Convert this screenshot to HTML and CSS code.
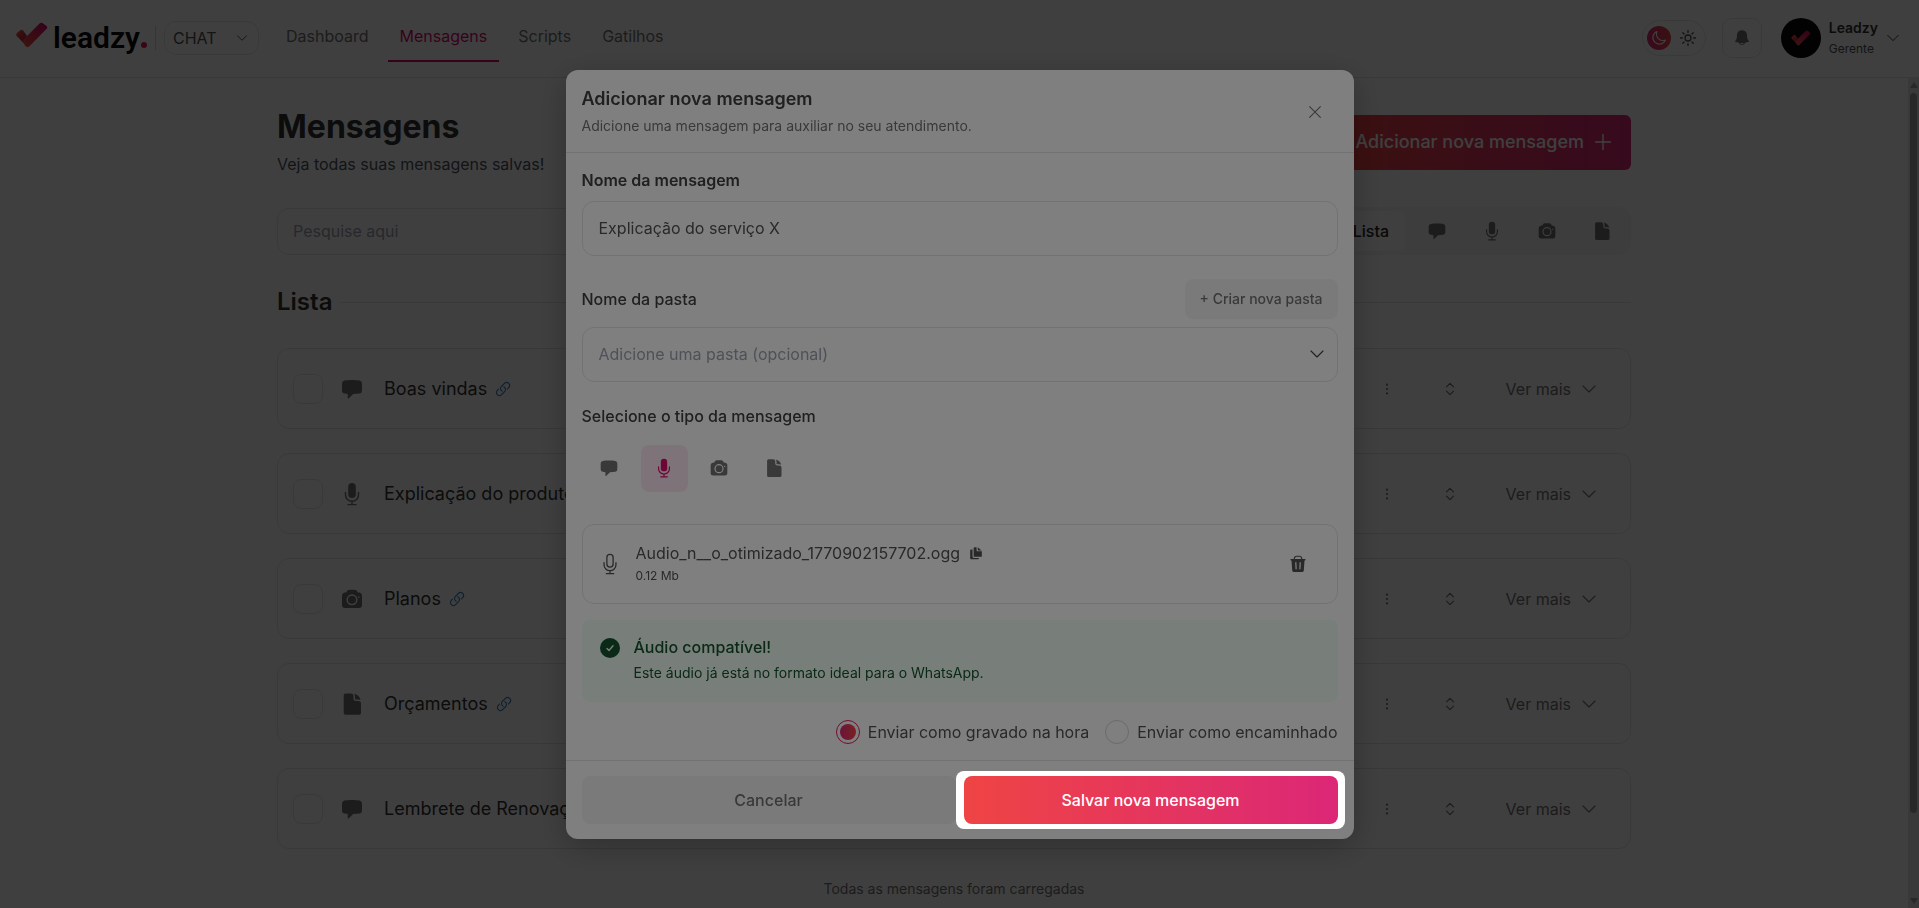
FILE: index.html
```html
<!DOCTYPE html>
<html lang="pt-BR">
<head>
    <meta charset="UTF-8">
    <meta name="viewport" content="width=device-width, initial-scale=1.0">
    <title>Leadzy - Mensagens</title>
    <link rel="stylesheet" href="styles.css">
</head>
<body>
    <!-- Shared icons -->
    <svg class="sprite" aria-hidden="true">
        <defs>
            <linearGradient id="brand" x1="0" y1="1" x2="1" y2="0">
                <stop offset="0" stop-color="#f4553f"/>
                <stop offset="1" stop-color="#d6006c"/>
            </linearGradient>
            <linearGradient id="brand-short" x1="0" y1="0" x2="1" y2="1">
                <stop offset="0" stop-color="#f4553f"/>
                <stop offset="1" stop-color="#b3103f"/>
            </linearGradient>
        </defs>
        <symbol id="i-chat" viewBox="0 0 24 24"><path d="M12 3c3 0 5.500.2 7.500.6A3 3 0 0 1 22 6.500v7a3 3 0 0 1-2.500 3c-2 .3-4.200.5-6.300.5L8.500 21.500c-.3.300-.8.100-.8-.3V17l-3.200-.4A3 3 0 0 1 2 13.500v-7a3 3 0 0 1 2.500-2.900C6.500 3.200 9 3 12 3z"/></symbol>
        <symbol id="i-mic" viewBox="0 0 24 24"><rect x="8.200" y="1" width="7.600" height="15" rx="3.800"/><path d="M5.500 10.500v2.300a6.500 6.500 0 0 0 13 0v-2.300M12 19.500v3M8 22.600h8" fill="none" stroke="currentColor" stroke-width="1.400" stroke-linecap="round"/></symbol>
        <symbol id="i-mic-o" viewBox="0 0 24 24"><g fill="none" stroke="currentColor" stroke-width="1.400" stroke-linecap="round"><rect x="8.600" y="1.500" width="6.800" height="14" rx="3.400"/><path d="M5.500 10.500v2.300a6.500 6.500 0 0 0 13 0v-2.300M12 19.500v3M8 22.600h8"/></g></symbol>
        <symbol id="i-camera" viewBox="0 0 24 24"><path fill-rule="evenodd" d="M9.300 2.700h5.400c.9 0 1.600.400 2.100 1.100l1 1.600 1.700.2A3 3 0 0 1 22 8.500V18a3 3 0 0 1-3 3H5a3 3 0 0 1-3-3V8.500a3 3 0 0 1 2.500-2.900l1.700-.2 1-1.600c.5-.7 1.200-1.100 2.100-1.100zM12 7.300a5.500 5.500 0 1 0 0 11 5.500 5.500 0 0 0 0-11zm0 1.400a4.100 4.100 0 1 1 0 8.200 4.100 4.100 0 0 1 0-8.200zm6.800.6a.8.800 0 1 0 0 1.600.8.800 0 0 0 0-1.600z"/></symbol>
        <symbol id="i-file" viewBox="0 0 24 24"><path d="M5.500 1.500H11a2.500 2.500 0 0 1 2.500 2.500v2.500A2.500 2.500 0 0 0 16 9h2.500a2.500 2.500 0 0 1 2.500 2.500V21a1.800 1.800 0 0 1-1.800 1.800H5.500A1.800 1.800 0 0 1 3.700 21V3.300a1.800 1.800 0 0 1 1.800-1.800z"/><path d="M14 1.700a8.500 8.500 0 0 1 6.600 6.400 4 4 0 0 0-2.300-.6H16a1 1 0 0 1-1-1V4.200a4 4 0 0 0-1-2.500z"/></symbol>
        <symbol id="i-copy" viewBox="0 0 24 24"><path d="M8 3.500A1.500 1.500 0 0 1 9.500 2H13v5.500A1.500 1.500 0 0 0 14.500 9H22v8a1.500 1.500 0 0 1-1.500 1.500h-11A1.500 1.500 0 0 1 8 17zM15 2l6.500 5.500H16a1 1 0 0 1-1-1zM2 7.500A1.500 1.500 0 0 1 3.500 6H6v12a2.500 2.500 0 0 0 2.500 2.500H17v.5a1.500 1.500 0 0 1-1.500 1.500h-12A1.500 1.500 0 0 1 2 21z"/></symbol>
        <symbol id="i-trash" viewBox="0 0 24 24"><path d="M7 6V5a3.300 3.300 0 0 1 3.300-3.300h3.400A3.300 3.300 0 0 1 17 5v1" fill="none" stroke="currentColor" stroke-width="1.500"/><path fill-rule="evenodd" d="M2.800 5.200h18.400a1 1 0 0 1 0 2h-.5l-1 13.300a2.300 2.300 0 0 1-2.300 2.200H6.600a2.300 2.300 0 0 1-2.300-2.200l-1-13.300h-.5a1 1 0 0 1 0-2zM8.200 9.500l.5 9.500h1.600l-.4-9.500zm5.900 0-.4 9.500h1.600l.5-9.500z"/></symbol>
        <symbol id="i-down" viewBox="0 0 24 24"><path d="m3 7.500 9 9 9-9" fill="none" stroke="currentColor" stroke-width="1.700" stroke-linecap="round" stroke-linejoin="round"/></symbol>
        <symbol id="i-plus" viewBox="0 0 24 24"><path d="M12 3v18M3 12h18" fill="none" stroke="currentColor" stroke-width="1.700" stroke-linecap="round"/></symbol>
        <symbol id="i-close" viewBox="0 0 24 24"><path d="m4 4 16 16M20 4 4 20" fill="none" stroke="currentColor" stroke-width="1.700" stroke-linecap="round"/></symbol>
        <symbol id="i-link" viewBox="0 0 24 24"><path d="M13.200 8.700a4.500 4.500 0 0 1 1.200 7.200l-4.500 4.500a4.500 4.500 0 0 1-6.400-6.400l1.800-1.800m13.400-.4 1.800-1.800a4.500 4.500 0 0 0-6.400-6.400L9.600 8.100a4.500 4.500 0 0 0 1.200 7.200" fill="none" stroke="currentColor" stroke-width="1.700" stroke-linecap="round"/></symbol>
        <symbol id="i-dots" viewBox="0 0 24 24"><circle cx="12" cy="4.500" r="1.900"/><circle cx="12" cy="12" r="1.900"/><circle cx="12" cy="19.500" r="1.900"/></symbol>
        <symbol id="i-sort" viewBox="0 0 24 24"><path d="m6 8.500 6-6 6 6m-12 7 6 6 6-6" fill="none" stroke="currentColor" stroke-width="2" stroke-linecap="round" stroke-linejoin="round"/></symbol>
        <symbol id="i-bell" viewBox="0 0 24 24"><path d="M12 1.500a6.800 6.800 0 0 0-6.800 6.800v2.200c0 2-.8 3.700-2.100 5.100-.6.700-.3 1.600.6 1.800 1.300.4 2.700.6 4.200.8a4.200 4.200 0 0 0 8.200 0c1.500-.2 2.900-.4 4.200-.8.900-.2 1.200-1.100.6-1.800a7.600 7.600 0 0 1-2.100-5.100V8.300A6.800 6.800 0 0 0 12 1.500zM9.700 18.500c1.500.1 3.100.1 4.600 0a2.400 2.400 0 0 1-4.600 0z" fill-rule="evenodd"/></symbol>
        <symbol id="i-moon" viewBox="0 0 24 24"><path d="M21.700 15A9.800 9.800 0 1 1 9 2.200 9.800 9.800 0 0 0 21.700 15z" fill="none" stroke="currentColor" stroke-width="1.700" stroke-linejoin="round"/></symbol>
        <symbol id="i-sun" viewBox="0 0 24 24"><path d="M12 2v2.500m0 15V22m10-10h-2.500m-15 0H2m17-7-1.700 1.700M6.700 17.300 5 19M19 19l-1.700-1.700M6.700 6.700 5 5" fill="none" stroke="currentColor" stroke-width="1.700" stroke-linecap="round"/><circle cx="12" cy="12" r="4" fill="none" stroke="currentColor" stroke-width="1.700"/></symbol>
        <symbol id="i-check" viewBox="0 0 32 26"><path d="M.8 11.300 4.300 8.300a2 2 0 0 1 2.800.2l3.900 5.300-3.500 7.200L.7 14a2 2 0 0 1 .1-2.700z" fill="url(#brand-short)"/><path d="M7.400 17.800 23.500 1.600a2.600 2.600 0 0 1 3.300-.3L30.500 4a2 2 0 0 1 .1 2.800L13.500 24.300a2.600 2.600 0 0 1-4-.4l-2.500-3.600a2 2 0 0 1 .4-2.500z" fill="url(#brand)"/></symbol>
    </svg>

    <header class="topbar">
        <a href="#" class="logo" aria-label="Leadzy"><svg class="logo-mark"><use href="#i-check"/></svg><span class="logo-name">leadzy</span><span class="logo-dot"></span></a>
        <div class="module">
            <select class="module-select" aria-label="Módulo"><option>CHAT</option></select>
            <svg class="icon icon-12 select-arrow"><use href="#i-down"/></svg>
        </div>
        <nav class="nav">
            <a href="#">Dashboard</a>
            <a href="#" class="active">Mensagens</a>
            <a href="#">Scripts</a>
            <a href="#">Gatilhos</a>
        </nav>
        <div class="user-area">
            <button class="theme-toggle" aria-label="Alternar tema">
                <span class="theme-on"><svg class="icon icon-16"><use href="#i-moon"/></svg></span>
                <svg class="icon icon-18"><use href="#i-sun"/></svg>
            </button>
            <button class="bell" aria-label="Notificações"><svg class="icon icon-18"><use href="#i-bell"/></svg></button>
            <button class="profile">
                <span class="avatar"><svg viewBox="0 0 32 26"><use href="#i-check" width="32" height="26"/></svg></span>
                <span class="profile-text"><strong>Leadzy</strong><small>Gerente</small></span>
                <svg class="icon icon-14"><use href="#i-down"/></svg>
            </button>
        </div>
    </header>

    <div class="page">
        <main class="content">
            <div class="page-head">
                <div>
                    <h1>Mensagens</h1>
                    <p>Veja todas suas mensagens salvas!</p>
                </div>
                <button class="btn-new">Adicionar nova mensagem <svg class="icon icon-20"><use href="#i-plus"/></svg></button>
            </div>

            <div class="toolbar">
                <input type="text" class="search" placeholder="Pesquise aqui" aria-label="Pesquise aqui">
                <div class="filters">
                    <button class="filter active">Lista</button>
                    <button class="filter" aria-label="Textos"><svg class="icon icon-20"><use href="#i-chat"/></svg></button>
                    <button class="filter" aria-label="Áudios"><svg class="icon icon-20"><use href="#i-mic"/></svg></button>
                    <button class="filter" aria-label="Mídias"><svg class="icon icon-20"><use href="#i-camera"/></svg></button>
                    <button class="filter" aria-label="Documentos"><svg class="icon icon-20"><use href="#i-file"/></svg></button>
                </div>
            </div>

            <h2 class="list-title">Lista</h2>

            <ul class="messages">
                <li class="message">
                    <input type="checkbox" class="check" aria-label="Boas vindas">
                    <svg class="icon icon-24"><use href="#i-chat"/></svg>
                    <span class="message-name">Boas vindas <svg class="icon link-icon"><use href="#i-link"/></svg></span>
                    <button class="icon-btn" aria-label="Opções"><svg class="icon icon-14"><use href="#i-dots"/></svg></button>
                    <button class="icon-btn" aria-label="Ordenar"><svg class="icon icon-14"><use href="#i-sort"/></svg></button>
                    <button class="more">Ver mais <svg class="icon icon-16"><use href="#i-down"/></svg></button>
                </li>
                <li class="message">
                    <input type="checkbox" class="check" aria-label="Explicação do produto">
                    <svg class="icon icon-24"><use href="#i-mic"/></svg>
                    <span class="message-name">Explicação do produto</span>
                    <button class="icon-btn" aria-label="Opções"><svg class="icon icon-14"><use href="#i-dots"/></svg></button>
                    <button class="icon-btn" aria-label="Ordenar"><svg class="icon icon-14"><use href="#i-sort"/></svg></button>
                    <button class="more">Ver mais <svg class="icon icon-16"><use href="#i-down"/></svg></button>
                </li>
                <li class="message">
                    <input type="checkbox" class="check" aria-label="Planos">
                    <svg class="icon icon-24"><use href="#i-camera"/></svg>
                    <span class="message-name">Planos <svg class="icon link-icon"><use href="#i-link"/></svg></span>
                    <button class="icon-btn" aria-label="Opções"><svg class="icon icon-14"><use href="#i-dots"/></svg></button>
                    <button class="icon-btn" aria-label="Ordenar"><svg class="icon icon-14"><use href="#i-sort"/></svg></button>
                    <button class="more">Ver mais <svg class="icon icon-16"><use href="#i-down"/></svg></button>
                </li>
                <li class="message">
                    <input type="checkbox" class="check" aria-label="Orçamentos">
                    <svg class="icon icon-24"><use href="#i-file"/></svg>
                    <span class="message-name">Orçamentos <svg class="icon link-icon"><use href="#i-link"/></svg></span>
                    <button class="icon-btn" aria-label="Opções"><svg class="icon icon-14"><use href="#i-dots"/></svg></button>
                    <button class="icon-btn" aria-label="Ordenar"><svg class="icon icon-14"><use href="#i-sort"/></svg></button>
                    <button class="more">Ver mais <svg class="icon icon-16"><use href="#i-down"/></svg></button>
                </li>
                <li class="message">
                    <input type="checkbox" class="check" aria-label="Lembrete de Renovação">
                    <svg class="icon icon-24"><use href="#i-chat"/></svg>
                    <span class="message-name">Lembrete de Renovação</span>
                    <button class="icon-btn" aria-label="Opções"><svg class="icon icon-14"><use href="#i-dots"/></svg></button>
                    <button class="icon-btn" aria-label="Ordenar"><svg class="icon icon-14"><use href="#i-sort"/></svg></button>
                    <button class="more">Ver mais <svg class="icon icon-16"><use href="#i-down"/></svg></button>
                </li>
            </ul>
            <p class="list-end">Todas as mensagens foram carregadas</p>
        </main>
        <div class="scrollbar"><span class="scroll-up"></span><span class="scroll-thumb"></span><span class="scroll-down"></span></div>
    </div>

    <!-- Modal -->
    <div class="overlay">
        <form class="modal" role="dialog" aria-labelledby="modal-title">
            <div class="modal-head">
                <div>
                    <h3 id="modal-title">Adicionar nova mensagem</h3>
                    <p>Adicione uma mensagem para auxiliar no seu atendimento.</p>
                </div>
                <button type="button" class="close" aria-label="Fechar"><svg class="icon icon-16"><use href="#i-close"/></svg></button>
            </div>

            <div class="modal-body">
                <label class="label strong" for="msg-name">Nome da mensagem</label>
                <input type="text" id="msg-name" class="field" value="Explicação do serviço X">

                <div class="folder-row">
                    <label class="label" for="folder">Nome da pasta</label>
                    <button type="button" class="btn-folder">+ Criar nova pasta</button>
                </div>
                <div class="select-wrap">
                    <select id="folder" class="field placeholder"><option>Adicione uma pasta (opcional)</option></select>
                    <svg class="icon icon-16 select-arrow"><use href="#i-down"/></svg>
                </div>

                <p class="label type-label">Selecione o tipo da mensagem</p>
                <div class="types">
                    <button type="button" class="type" aria-label="Texto"><svg class="icon icon-20"><use href="#i-chat"/></svg></button>
                    <button type="button" class="type active" aria-label="Áudio"><svg class="icon icon-20"><use href="#i-mic"/></svg></button>
                    <button type="button" class="type" aria-label="Mídia"><svg class="icon icon-20"><use href="#i-camera"/></svg></button>
                    <button type="button" class="type" aria-label="Documento"><svg class="icon icon-20"><use href="#i-file"/></svg></button>
                </div>

                <div class="audio-file">
                    <svg class="icon icon-22"><use href="#i-mic-o"/></svg>
                    <div class="audio-info">
                        <p class="audio-name">Audio_n__o_otimizado_1770902157702.ogg <svg class="icon icon-14"><use href="#i-copy"/></svg></p>
                        <small>0.12 Mb</small>
                    </div>
                    <button type="button" class="trash" aria-label="Excluir"><svg class="icon icon-18"><use href="#i-trash"/></svg></button>
                </div>

                <div class="notice">
                    <svg class="notice-icon" viewBox="0 0 20 20"><circle cx="10" cy="10" r="10" fill="#14532d"/><path d="m7 10.500 2 2 4-4.800" fill="none" stroke="#f0fdf4" stroke-width="1.400" stroke-linecap="round" stroke-linejoin="round"/></svg>
                    <div>
                        <strong>Áudio compatível!</strong>
                        <p>Este áudio já está no formato ideal para o WhatsApp.</p>
                    </div>
                </div>

                <div class="send-as">
                    <label><input type="radio" name="send" checked>Enviar como gravado na hora</label>
                    <label><input type="radio" name="send">Enviar como encaminhado</label>
                </div>
            </div>

            <div class="modal-foot">
                <button type="button" class="btn-cancel">Cancelar</button>
                <div class="spot-target">
                    <button type="submit" class="btn-save">Salvar nova mensagem</button>
                    <span class="spotlight"></span>
                </div>
            </div>
        </form>
    </div>
</body>
</html>
```
FILE: styles.css
```css
/* General Styles */
* {
    margin: 0;
    padding: 0;
    box-sizing: border-box;
}

body {
    font-family: 'Inter', sans-serif;
    font-size: 16px;
    line-height: 24px;
    color: #333;
    background: #fff;
    height: 100vh;
    overflow: hidden;
    display: flex;
    flex-direction: column;
}

button,
input,
select {
    font: inherit;
    color: inherit;
    border: none;
    background: none;
}

select,
input[type="checkbox"],
input[type="radio"] {
    appearance: none;
}

button {
    cursor: pointer;
}

a {
    color: inherit;
    text-decoration: none;
}

.sprite {
    position: absolute;
    width: 0;
    height: 0;
}

/* Icons */
.icon {
    fill: currentColor;
    flex: none;
}

.icon-12 { width: 12px; height: 12px; }
.icon-14 { width: 14px; height: 14px; }
.icon-16 { width: 16px; height: 16px; }
.icon-18 { width: 18px; height: 18px; }
.icon-20 { width: 20px; height: 20px; }
.icon-22 { width: 22px; height: 22px; }
.icon-24 { width: 24px; height: 24px; }

/* Top bar */
.topbar {
    flex: none;
    height: 78px;
    padding: 0 19px 2px 16px;
    display: flex;
    align-items: center;
    border-bottom: 1px solid #e5e5e5;
}

.logo {
    display: flex;
    align-items: center;
    height: 24px;
    padding-right: 8px;
    border-right: 1px solid #d4d4d4;
    margin-right: 8px;
}

.logo-mark {
    width: 32px;
    height: 26px;
    margin-right: 5px;
    margin-bottom: 6px;
}

.logo-name {
    font-family: 'Roboto', sans-serif;
    font-size: 30px;
    font-weight: 600;
    line-height: 32px;
    color: #0a0a0a;
}

.logo-dot {
    width: 6px;
    height: 6px;
    border-radius: 50%;
    background: #e11d5a;
    margin-left: 1px;
    margin-top: 14px;
}

.module {
    display: flex;
    align-items: center;
    position: relative;
}

.module-select {
    width: 95px;
    height: 34px;
    padding: 0 8px;
    border: 1px solid #e5e5e5;
    border-radius: 12px;
    color: #525252;
}

.select-arrow {
    position: absolute;
    right: 11px;
    pointer-events: none;
}

.nav {
    display: flex;
    align-self: stretch;
    align-items: center;
    gap: 7px;
    margin-left: 15px;
    padding-bottom: 2px;
    color: #737373;
}

.nav a {
    padding: 12px;
    border-bottom: 2px solid transparent;
}

.nav .active {
    color: #db0a6b;
    border-color: #db0a6b;
}

.user-area {
    margin-left: auto;
    display: flex;
    align-items: center;
    gap: 16px;
}

.theme-toggle {
    display: flex;
    align-items: center;
    gap: 8px;
    height: 36px;
    padding: 0 8px 0 4px;
    border: 1px solid #e5e5e5;
    border-radius: 18px;
    color: #525252;
}

.theme-on {
    width: 24px;
    height: 24px;
    border-radius: 50%;
    background: linear-gradient(90deg, #db2777, #ef4444);
    color: #fff;
    display: grid;
    place-items: center;
}

.bell {
    width: 40px;
    height: 40px;
    border: 1px solid #e5e5e5;
    border-radius: 10px;
    display: grid;
    place-items: center;
    color: #737373;
}

.profile {
    display: flex;
    align-items: center;
    gap: 8px;
    margin-left: 3px;
}

.avatar {
    width: 40px;
    height: 40px;
    border-radius: 50%;
    background: #0a0a0a;
    display: grid;
    place-items: center;
}

.avatar svg {
    width: 20px;
    height: 16px;
}

.profile-text {
    display: flex;
    flex-direction: column;
    text-align: left;
}

.profile-text strong {
    font-size: 14px;
    font-weight: 600;
    line-height: 22px;
}

.profile-text small {
    font-size: 12px;
    line-height: 20px;
    color: #525252;
}

/* Page */
.page {
    flex: 1;
    min-height: 0;
    display: flex;
}

.content {
    width: 1354px;
    max-width: 100%;
    margin: 0 auto;
    padding-top: 27px;
}

.scrollbar {
    width: 11px;
    background: #e5e5e5;
    display: flex;
    flex-direction: column;
    align-items: center;
    padding: 4px 0;
    gap: 5px;
}

.scroll-thumb {
    width: 7px;
    flex: 1;
    margin-bottom: 80px;
    border-radius: 4px;
    background: #a3a3a3;
}

.scroll-up {
    border: 4px solid transparent;
    border-top: none;
    border-bottom: 6px solid #a3a3a3;
}

.scroll-down {
    border: 4px solid transparent;
    border-bottom: none;
    border-top: 6px solid #a3a3a3;
}

.page-head {
    display: flex;
    align-items: center;
    justify-content: space-between;
}

.page-head h1 {
    font-size: 32px;
    font-weight: 700;
    line-height: 44px;
}

.page-head p {
    line-height: 30px;
    color: #4b5563;
}

.btn-new {
    height: 55px;
    padding: 0 18px;
    border-radius: 6px;
    background: linear-gradient(90deg, #ef4444, #db2777);
    color: #fff;
    font-size: 18px;
    font-weight: 500;
    display: flex;
    align-items: center;
    gap: 9px;
}

.toolbar {
    display: flex;
    align-items: center;
    justify-content: space-between;
    margin-top: 28px;
}

.search {
    width: 540px;
    height: 47px;
    padding: 0 15px;
    border: 1px solid #e5e5e5;
    border-radius: 12px;
}

.search::placeholder {
    color: #9ca3af;
    opacity: 1;
}

.filters {
    display: flex;
    gap: 8px;
    padding: 4px 6px;
    border-radius: 12px;
    background: #f5f5f5;
    color: #737373;
}

.filter {
    min-width: 47px;
    height: 40px;
    border-radius: 8px;
    display: grid;
    place-items: center;
}

.filter.active {
    padding: 0 16px;
    background: #fff;
    color: #262626;
    font-weight: 500;
}

.list-title {
    display: flex;
    align-items: center;
    gap: 8px;
    margin: 29px 0 28px;
    font-size: 24px;
    font-weight: 600;
    line-height: 36px;
}

.list-title::after {
    content: '';
    flex: 1;
    height: 1px;
    background: #e5e5e5;
}

.messages {
    list-style: none;
    display: flex;
    flex-direction: column;
    gap: 24px;
}

.message {
    height: 81px;
    padding: 0 18px 0 15px;
    border: 1px solid #e5e5e5;
    border-radius: 12px;
    display: flex;
    align-items: center;
    color: #737373;
}

.check {
    width: 30px;
    height: 30px;
    margin-right: 17px;
    border: 1px solid #e5e5e5;
    border-radius: 8px;
}

.message-name {
    flex: 1;
    display: flex;
    align-items: center;
    gap: 8px;
    margin-left: 20px;
    font-size: 18px;
    color: #333;
}

.link-icon {
    width: 16px;
    height: 16px;
    color: #2f80c9;
}

.icon-btn {
    width: 63px;
    display: grid;
    place-items: center;
}

.more {
    display: flex;
    align-items: center;
    gap: 10px;
    margin-left: 24px;
    padding-right: 15px;
}

.list-end {
    margin-top: 28px;
    text-align: center;
    font-size: 14px;
    color: #737373;
}

/* Modal */
.overlay {
    position: fixed;
    inset: 0;
    display: grid;
    place-items: center;
    background: rgba(0, 0, 0, 0.5);
    overflow: hidden;
}

.modal {
    width: 788px;
    max-width: 100%;
    border-radius: 12px;
    background: #fff;
    box-shadow: 0 8px 32px rgba(0, 0, 0, 0.25);
    color: #525252;
}

.modal-head {
    display: flex;
    align-items: center;
    justify-content: space-between;
    padding: 15px 16px 13px;
    border-bottom: 1px solid #e5e5e5;
}

.modal-head h3 {
    font-size: 18px;
    font-weight: 600;
    line-height: 28px;
    color: #404040;
}

.modal-head p {
    font-size: 14px;
    line-height: 26px;
    color: #737373;
}

.close {
    width: 46px;
    height: 46px;
    display: grid;
    place-items: center;
    color: #737373;
}

.modal-body {
    padding: 15px 16px 16px;
}

.label {
    display: block;
    font-weight: 500;
    color: #404040;
}

.label.strong {
    font-weight: 600;
    margin-bottom: 9px;
}

.field {
    display: block;
    width: 100%;
    height: 55px;
    padding: 0 16px;
    border: 1px solid #e5e5e5;
    border-radius: 12px;
}

.placeholder {
    color: #9ca3af;
}

.folder-row {
    display: flex;
    align-items: center;
    justify-content: space-between;
    margin: 23px 0 8px;
}

.btn-folder {
    height: 40px;
    padding: 0 15px;
    border-radius: 8px;
    background: #f5f5f5;
    color: #737373;
    font-size: 14px;
    font-weight: 500;
}

.select-wrap {
    position: relative;
    display: flex;
    align-items: center;
}

.select-wrap .select-arrow {
    right: 13px;
    color: #404040;
}

.type-label {
    margin-top: 22px;
}

.types {
    display: flex;
    gap: 8px;
    margin: 17px 0 32px;
    padding-left: 4px;
    color: #737373;
}

.type {
    width: 47px;
    height: 47px;
    border-radius: 8px;
    display: grid;
    place-items: center;
}

.type.active {
    background: #fce7f3;
    color: #db0a6b;
}

.audio-file {
    display: flex;
    align-items: center;
    height: 80px;
    padding: 0 30px 0 16px;
    border: 1px solid #e5e5e5;
    border-radius: 12px;
}

.audio-info {
    flex: 1;
    margin-left: 15px;
}

.audio-name {
    display: flex;
    align-items: center;
    gap: 9px;
}

.audio-info small {
    display: block;
    font-size: 12px;
    line-height: 22px;
}

.trash {
    display: grid;
    place-items: center;
}

.notice {
    display: flex;
    gap: 14px;
    margin-top: 16px;
    padding: 15px 18px;
    border-radius: 8px;
    background: #f0fdf4;
    color: #14532d;
}

.notice-icon {
    width: 20px;
    height: 20px;
    margin-top: 3px;
}

.notice strong {
    display: block;
    font-weight: 500;
}

.notice p {
    font-size: 14px;
    line-height: 28px;
}

.send-as {
    display: flex;
    justify-content: flex-end;
    gap: 16px;
    margin-top: 18px;
}

.send-as label {
    display: flex;
    align-items: center;
    gap: 8px;
}

.send-as input {
    width: 24px;
    height: 24px;
    border: 1px solid #d4d4d4;
    border-radius: 50%;
    display: grid;
    place-items: center;
}

.send-as input:checked {
    border-color: #e11d5a;
}

.send-as input:checked::before {
    content: '';
    width: 16px;
    height: 16px;
    border-radius: 50%;
    background: linear-gradient(90deg, #db2777, #ef4444);
}

.modal-foot {
    display: grid;
    grid-template-columns: 1fr 1fr;
    gap: 8px;
    padding: 15px 16px;
    border-top: 1px solid #e5e5e5;
}

.btn-cancel,
.btn-save {
    width: 100%;
    height: 48px;
    border-radius: 8px;
    font-weight: 500;
}

.btn-cancel {
    background: #f5f5f5;
    color: #737373;
}

.btn-save {
    background: linear-gradient(90deg, #ef4444, #db2777);
    color: #fff;
}

/* Guided tour spotlight, dims all but the save button */
.spot-target {
    position: relative;
}

.spotlight {
    position: absolute;
    inset: -5px -7px -5px -8px;
    border-radius: 8px;
    box-shadow: 0 0 0 9999px rgba(0, 0, 0, 0.5);
    pointer-events: none;
}
```
